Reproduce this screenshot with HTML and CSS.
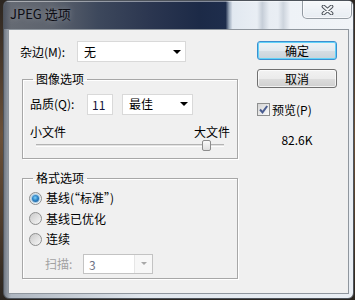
FILE: index.html
```html
<!DOCTYPE html>
<html lang="zh-CN">
<head>
    <meta charset="UTF-8">
    <meta name="viewport" content="width=device-width, initial-scale=1.0">
    <title>JPEG 选项</title>
    <link rel="stylesheet" href="styles.css">
</head>
<body>
    <div class="window">
        <div class="titlebar">
            <span class="title">JPEG 选项</span>
            <div class="close-btn">
                <svg width="13" height="10" viewBox="0 0 13 10">
                    <path d="M2.5 1.5 L10.5 8.5 M10.5 1.5 L2.5 8.5" stroke="#50565e" stroke-width="3.8" stroke-linecap="round" fill="none"/>
                    <path d="M2.5 1.5 L10.5 8.5 M10.5 1.5 L2.5 8.5" stroke="#f4f6f8" stroke-width="1.8" stroke-linecap="round" fill="none"/>
                </svg>
            </div>
        </div>

        <div class="client">
            <div class="left-col">
                <div class="matte-row">
                    <label class="row-label">杂边(M):</label>
                    <div class="combo combo-matte"><span>无</span><i class="arrow"></i></div>
                </div>

                <fieldset class="group group-image">
                    <legend>图像选项</legend>
                    <div class="quality-row">
                        <label class="row-label">品质(Q):</label>
                        <div class="field quality-num">11</div>
                        <div class="combo combo-quality"><span>最佳</span><i class="arrow"></i></div>
                    </div>
                    <div class="size-labels">
                        <span>小文件</span>
                        <span>大文件</span>
                    </div>
                    <div class="slider">
                        <!-- 品质 11 / 12 -->
                        <div class="thumb" style="margin-left: calc((100% - 9px) * 0.93);"></div>
                    </div>
                </fieldset>

                <fieldset class="group group-format">
                    <legend>格式选项</legend>
                    <div class="radio-row"><span class="radio checked"><i class="dot"></i></span><span>基线(“标准”)</span></div>
                    <div class="radio-row"><span class="radio"></span><span>基线已优化</span></div>
                    <div class="radio-row"><span class="radio"></span><span>连续</span></div>
                    <div class="scan-row">
                        <span class="scan-label">扫描:</span>
                        <div class="combo combo-scan">
                            <span class="scan-value">3</span>
                            <span class="scan-drop"><i class="arrow"></i></span>
                        </div>
                    </div>
                </fieldset>
            </div>

            <div class="right-col">
                <button class="btn btn-default">确定</button>
                <button class="btn">取消</button>
                <div class="check-row">
                    <span class="checkbox">
                        <svg width="11" height="11" viewBox="0 0 11 11">
                            <path d="M2 5.5 L4.5 8.3 L9.2 2" stroke="#4a5d91" stroke-width="2" fill="none"/>
                        </svg>
                    </span>
                    <span>预览(P)</span>
                </div>
                <div class="file-size">82.6K</div>
            </div>
        </div>
    </div>
</body>
</html>
```

FILE: styles.css
```css
* {
    box-sizing: border-box;
}
body {
    margin: 0;
    width: 355px;
    height: 300px;
    overflow: hidden;
    background: linear-gradient(to bottom, #2c2621, #6b5038 45%, #4d3b2b 75%, #2a2520);
    font-family: "Noto Sans CJK SC", "Noto Sans", sans-serif;
    font-size: 12px;
    line-height: 14px;
    color: #000;
}
.window {
    margin-left: 3px;
    width: 351px;
    height: 299px;
    border: 1px solid #4d535b;
    border-radius: 6px;
    background: linear-gradient(90deg, #737a85 0, #aeb6c0 2%, #e0e6ed 40%, #e9eef4 100%);
    display: flex;
    flex-direction: column;
    overflow: hidden;
}
.titlebar {
    height: 28px;
    flex-shrink: 0;
    display: flex;
    justify-content: space-between;
    align-items: flex-start;
    background: linear-gradient(90deg, #4f5561 0, #656a73 2%, #5d636e 14%, #3d485c 27%, #2b3650 42%, #1c2a47 56%, #1e2d4c 63.5%, #9aa8ba 64.5%, #e1e8f0 65.5%, #e9eef4 72.5%, #c6ced8 74%, #e8edf3 76%, #e9eef4 78.5%, #cdd4dd 80%, #eef2f7 82%, #f1f4f8 100%);
    box-shadow: inset 0 1px 0 rgba(255, 255, 255, 0.45);
}
.title {
    padding: 5px 0 0 6px;
    font-size: 13px;
    line-height: 16px;
    color: #0d0d14;
    text-shadow: 0 0 6px rgba(255, 255, 255, 0.35);
}
.close-btn {
    width: 50px;
    height: 19px;
    margin: -1px 1px 0 0;
    display: flex;
    align-items: center;
    justify-content: center;
    border: 1px solid rgba(70, 80, 92, 0.55);
    border-top: none;
    border-radius: 0 0 5px 5px;
    background: linear-gradient(to bottom, rgba(255, 255, 255, 0.55), rgba(225, 231, 238, 0.6));
    box-shadow: inset 0 0 0 1px rgba(255, 255, 255, 0.6);
}
.close-btn svg {
    margin-top: 1px;
}
.client {
    flex: 1;
    margin: 0 4px 4px 4px;
    display: flex;
    background-color: #f0f0f0;
    border: 1px solid #8f969e;
}
.left-col {
    padding-top: 11px;
}
.matte-row {
    display: flex;
    align-items: center;
    margin-left: 11px;
}
.row-label {
    width: 57px;
    flex-shrink: 0;
}
.combo {
    display: flex;
    align-items: center;
    justify-content: space-between;
    background-color: #fff;
    border: 1px solid #d9d9d9;
    padding: 0 4px 0 6px;
}
.combo-matte {
    width: 109px;
    height: 21px;
}
.arrow {
    width: 0;
    height: 0;
    border-left: 4px solid transparent;
    border-right: 4px solid transparent;
    border-top: 4px solid #000;
}
.group {
    margin: 0;
    min-width: 0;
    width: 216px;
    border: 1px solid #a7a7a7;
    box-shadow: 1px 1px 0 #fff, inset 1px 1px 0 #fff;
    padding: 7px 7px 7px 7px;
}
.group legend {
    padding: 0 3px;
    margin-left: 3px;
    line-height: 14px;
}
.group-image {
    margin: 10px 0 0 13px;
}
.group-format {
    margin: 12px 0 0 13px;
    padding: 3px 7px 4px 7px;
}
.quality-row {
    display: flex;
    align-items: center;
    height: 22px;
}
.field {
    background-color: #fff;
    border: 1px solid #d9d9d9;
}
.quality-num {
    width: 26px;
    height: 21px;
    padding: 3px 0 0 4px;
    color: #14143a;
}
.combo-quality {
    width: 71px;
    height: 21px;
    margin-left: 9px;
}
.size-labels {
    display: flex;
    justify-content: space-between;
    margin-top: 10px;
}
.slider {
    margin: 1px 6px 0 6px;
    height: 11px;
    background: linear-gradient(to bottom, transparent 4px, #b3b3b3 4px, #b3b3b3 5px, #e2e2e2 5px, #e2e2e2 6px, #fdfdfd 6px, #fdfdfd 7px, transparent 7px);
}
.thumb {
    width: 9px;
    height: 11px;
    border: 1px solid #8c8c8c;
    border-radius: 2px;
    background: linear-gradient(to bottom, #fafafa, #dedede);
}
.radio-row {
    display: flex;
    align-items: center;
    height: 20.5px;
    margin-left: -1px;
}
.radio {
    width: 13px;
    height: 13px;
    margin-right: 4px;
    border-radius: 50%;
    border: 1px solid #8e8f8f;
    background: linear-gradient(135deg, #c9c9c9, #f7f7f7);
    display: flex;
    align-items: center;
    justify-content: center;
}
.radio.checked {
    background: linear-gradient(135deg, #d0d6da, #f9fbfc);
}
.dot {
    width: 7px;
    height: 7px;
    border-radius: 50%;
    background: radial-gradient(circle at 45% 40%, #7fd0f7 0, #2e86c9 45%, #134d86 100%);
    box-shadow: 0 0 0 1px #a5cde8;
}
.scan-row {
    display: flex;
    align-items: center;
    margin-top: 4px;
    padding-left: 15px;
}
.scan-label {
    width: 38px;
    color: #a2a2a2;
}
.combo-scan {
    width: 70px;
    height: 20px;
    padding: 0;
    border-color: #c3c3c3;
    align-items: stretch;
}
.scan-value {
    flex: 1;
    padding: 3px 0 0 5px;
    color: #6e7385;
}
.scan-drop {
    width: 18px;
    border-left: 1px solid #e6e6e6;
    background-color: #f7f7f7;
    display: flex;
    align-items: center;
    justify-content: center;
}
.scan-drop .arrow {
    border-left-width: 3px;
    border-right-width: 3px;
    border-top: 3px solid #a8a8a8;
}
.right-col {
    margin-left: 19px;
    padding-top: 11px;
    width: 80px;
    display: flex;
    flex-direction: column;
}
.btn {
    width: 80px;
    height: 19px;
    padding: 0;
    border: 1px solid #707070;
    border-radius: 3px;
    background: linear-gradient(to bottom, #f2f2f2 0, #ebebeb 50%, #dddddd 51%, #cfcfcf 100%);
    box-shadow: inset 0 0 0 1px rgba(255, 255, 255, 0.7);
    font: inherit;
    line-height: 16px;
    color: #000;
}
.btn + .btn {
    margin-top: 9px;
}
.btn-default {
    border-color: #3c8fd0;
    background: linear-gradient(to bottom, #eef3f6 0, #e3eaef 50%, #d6dee4 51%, #c9d3da 100%);
    box-shadow: inset 0 0 0 1px #62d3f8;
}
.check-row {
    display: flex;
    align-items: center;
    margin-top: 15px;
    height: 13px;
}
.checkbox {
    width: 13px;
    height: 13px;
    margin-right: 2px;
    border: 1px solid #8e8f8f;
    background: linear-gradient(135deg, #d4d4d4, #fbfbfb);
    display: flex;
    align-items: center;
    justify-content: center;
}
.file-size {
    margin-top: 17px;
    text-align: center;
}
```
